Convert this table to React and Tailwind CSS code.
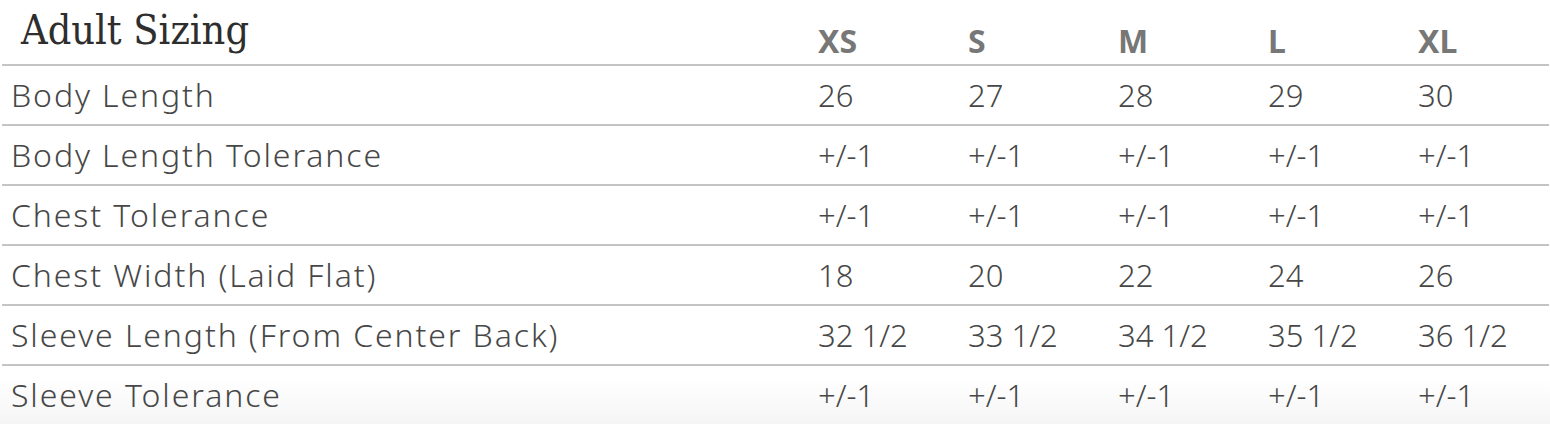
export default function App() {
  const sizes = ["XS", "S", "M", "L", "XL"];
  const rows = [
    ["Body Length", ["26", "27", "28", "29", "30"]],
    ["Body Length Tolerance", ["+/-1", "+/-1", "+/-1", "+/-1", "+/-1"]],
    ["Chest Tolerance", ["+/-1", "+/-1", "+/-1", "+/-1", "+/-1"]],
    ["Chest Width (Laid Flat)", ["18", "20", "22", "24", "26"]],
    ["Sleeve Length (From Center Back)", ["32 1/2", "33 1/2", "34 1/2", "35 1/2", "36 1/2"]],
    ["Sleeve Tolerance", ["+/-1", "+/-1", "+/-1", "+/-1", "+/-1"]],
  ];
  return (
    <div className="w-[1550px] h-[424px] overflow-hidden bg-[linear-gradient(to_bottom,#ffffff_378px,#f5f5f5_424px)]">
      <div className="pl-[2px] pr-[1px]">
        <div className="flex h-[66px] border-b-2 border-[#c4c4c4]">
          <div className="w-[816px] shrink-0 pl-[19px] pt-[10px] text-[41px] leading-[41px] text-[#2e2e2e] font-['DejaVu_Serif_Condensed','DejaVu_Serif',serif]">
            Adult Sizing
          </div>
          {sizes.map((s) => (
            <div
              key={s}
              className="w-[150px] shrink-0 pt-[25px] text-[32px] leading-[32px] font-bold text-[#777777] font-['Noto_Sans',sans-serif]"
            >
              {s}
            </div>
          ))}
        </div>
        {rows.map(([label, vals]) => (
          <div
            key={label}
            className="flex h-[60px] items-center border-b-2 border-[#c4c4c4] text-[#474747] font-[350] font-['Noto_Sans',sans-serif]"
          >
            <div className="w-[816px] shrink-0 pl-[9px] text-[32px] leading-[32px] tracking-[1.9px]">
              {label}
            </div>
            {vals.map((v, i) => (
              <div key={i} className="w-[150px] shrink-0 text-[31px] leading-[32px]">
                {v}
              </div>
            ))}
          </div>
        ))}
      </div>
    </div>
  );
}
